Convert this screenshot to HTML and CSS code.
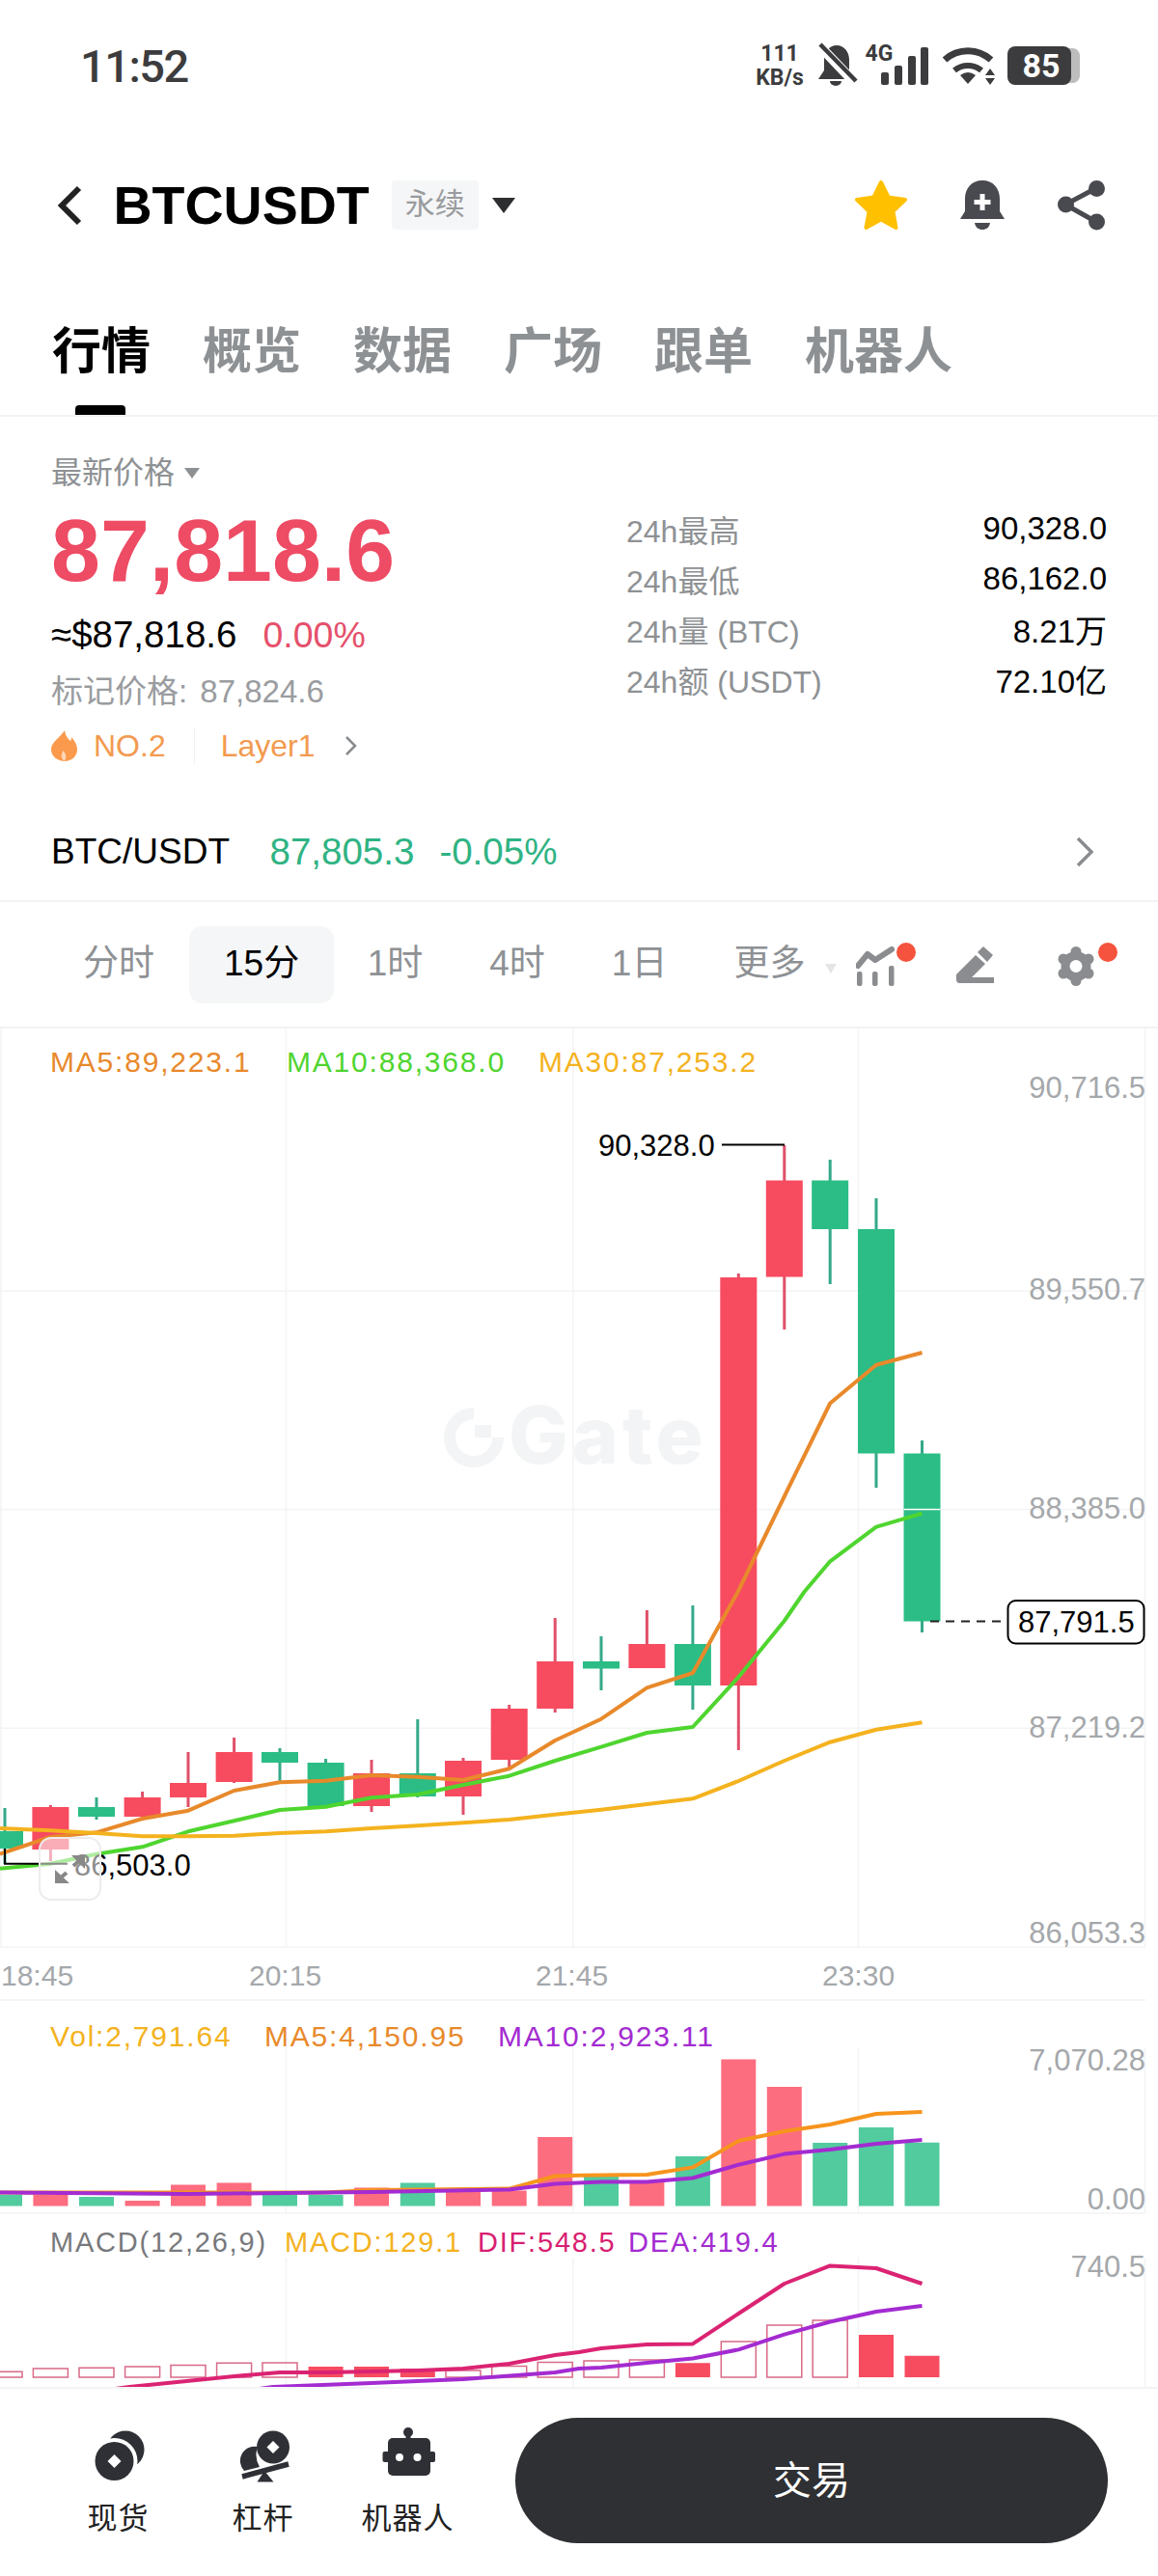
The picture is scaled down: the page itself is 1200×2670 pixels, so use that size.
FILE: index.html
```html
<!DOCTYPE html>
<html lang="zh-CN">
<head>
  <meta charset="UTF-8" />
  <meta name="viewport" content="width=device-width, initial-scale=1.0"/>
  <title>BTCUSDT</title>
  <link rel="stylesheet" href="styles.css">
</head>
<body>
  <div class="status-bar">
    <span class="clock">11:52</span>
    <svg class="status-icons" width="340" height="50" viewBox="782 42 340 50">
      <text class="net" x="808" y="63" text-anchor="middle">111</text>
      <text class="net" x="808" y="88" text-anchor="middle">KB/s</text>
      <path class="ink" d="M867 47c-8 0-13 7-13 15v11l-6 9h37l-5-9V62c0-8-5-15-13-15z"/>
      <path class="ink" d="M860 84h12a6 5 0 0 1-12 0z"/>
      <path d="M846 44l40 42" stroke="#fff" stroke-width="10"/>
      <path d="M850 46l37 38" stroke="#3c3c3e" stroke-width="4.5"/>
      <text class="net" x="911" y="63" text-anchor="middle">4G</text>
      <rect class="ink" x="913" y="75" width="8" height="13" rx="2"/>
      <rect class="ink" x="927" y="68" width="8" height="20" rx="2"/>
      <rect class="ink" x="941" y="58" width="8" height="30" rx="2"/>
      <rect class="ink" x="954" y="49" width="8" height="39" rx="2"/>
      <path d="M979 62A36 36 0 0 1 1027 62" fill="none" stroke="#3c3c3e" stroke-width="7"/>
      <path d="M989 73A22 22 0 0 1 1017 73" fill="none" stroke="#3c3c3e" stroke-width="6"/>
      <path class="ink" d="M995 78Q1003 72 1011 78L1003 87z"/>
      <path class="ink" d="M1026 71l5 7h-10zM1026 88l5-7h-10z"/>
      <path d="M1108 50h4c4 0 7 4 7 8v20c0 4-3 8-7 8h-4z" fill="#bdbdbd"/>
      <rect class="ink" x="1044" y="48" width="66" height="40" rx="8"/>
      <text class="batt" x="1079" y="80" text-anchor="middle">85</text>
    </svg>
  </div>

  <div class="nav">
    <svg class="back" width="26" height="42" viewBox="0 0 26 42"><path d="M23 3L5 21l18 18" fill="none" stroke="#222" stroke-width="6"/></svg>
    <span class="symbol">BTCUSDT</span>
    <span class="perp">永续</span>
    <span class="caret"></span>
    <div class="nav-icons">
      <svg width="54" height="52" viewBox="884 186 54 52">
        <path d="M911 188l7.600 15.500 17.400 2.500-12.600 12 3.100 17-15.500-8.500-15.500 8.500 3.100-17-12.600-12 17.400-2.500z" fill="#ffc000" stroke="#ffc000" stroke-width="4" stroke-linejoin="round"/>
      </svg>
      <svg width="46" height="52" viewBox="993 186 46 52">
        <path class="icon" d="M1016 186c-11 0-18 8-18 19v13l-5 8h46l-5-8v-13c0-11-7-19-18-19z"/>
        <path class="icon" d="M1008 230h16c-1 5-4 7-8 7s-7-2-8-7z"/>
        <path d="M1013.500 200h5v6h6v5h-6v6h-5v-6h-6v-5h6z" fill="#fff"/>
      </svg>
      <svg width="50" height="52" viewBox="1097 186 50 52">
        <path d="M1137 194l-32 17 32 18" fill="none" stroke="#484a4f" stroke-width="5"/>
        <circle class="icon" cx="1137.500" cy="194.500" r="8.500"/>
        <circle class="icon" cx="1105.500" cy="211" r="8.500"/>
        <circle class="icon" cx="1137.500" cy="229" r="8.500"/>
      </svg>
    </div>
  </div>

  <div class="tabs">
    <span class="tab active">行情</span>
    <span class="tab">概览</span>
    <span class="tab">数据</span>
    <span class="tab">广场</span>
    <span class="tab">跟单</span>
    <span class="tab">机器人</span>
  </div>

  <div class="price-panel">
    <div class="price-left">
      <div class="price-label">最新价格<span class="mini-caret"></span></div>
      <div class="last-price">87,818.6</div>
      <div class="fiat">≈$87,818.6<span class="change">0.00%</span></div>
      <div class="mark">标记价格: 87,824.6</div>
      <div class="rank">
        <svg width="27" height="32" viewBox="0 0 27 32">
          <path d="M14 0c1 6 3 8 6 11 1-1 1-3 1-4 4 4 6 9 6 13 0 7-6 12-13 12S0 27 0 20C0 12 8 9 14 0z" fill="#fb9a4c"/>
          <path d="M13.500 32c-3-3-4-6-1-11 3 4 4 7 1 11z" fill="#fff" opacity="0.6"/>
        </svg>
        <span class="rank-no">NO.2</span>
        <span class="rank-tag">Layer1</span>
        <svg width="13" height="22" viewBox="0 0 13 22"><path d="M2 2l9 9-9 9" fill="none" stroke="#888b8e" stroke-width="2.500"/></svg>
      </div>
    </div>
    <div class="stats">
      <div class="stat"><span>24h最高</span><b>90,328.0</b></div>
      <div class="stat"><span>24h最低</span><b>86,162.0</b></div>
      <div class="stat"><span>24h量 (BTC)</span><b>8.21万</b></div>
      <div class="stat"><span>24h额 (USDT)</span><b>72.10亿</b></div>
    </div>
  </div>

  <div class="spot-row">
    <span class="pair">BTC/USDT</span>
    <span class="spot-price">87,805.3</span>
    <span class="spot-change">-0.05%</span>
    <svg class="spot-arrow" width="20" height="32" viewBox="0 0 20 32"><path d="M3 2l14 14L3 30" fill="none" stroke="#8a8c8f" stroke-width="3.500"/></svg>
  </div>

  <div class="intervals">
    <span class="interval">分时</span>
    <span class="interval current">15分</span>
    <span class="interval">1时</span>
    <span class="interval">4时</span>
    <span class="interval">1日</span>
    <span class="interval">更多</span>
    <span class="more-caret"></span>
    <div class="tools">
      <svg width="62" height="46" viewBox="888 975 62 46">
        <path d="M890 999l10-12 8 6 17-11" fill="none" stroke="#8a8c8f" stroke-width="6" stroke-linecap="round" stroke-linejoin="round"/>
        <rect class="tool" x="889" y="1005" width="5.500" height="15" rx="2"/>
        <rect class="tool" x="905" y="1005" width="5.500" height="15" rx="2"/>
        <rect class="tool" x="922" y="999" width="5.500" height="21" rx="2"/>
        <circle class="dot" cx="940" cy="985" r="10"/>
      </svg>
      <svg class="tool-pen" width="40" height="40" viewBox="992 980 40 40">
        <path class="tool" d="M1020 981l10 9-6 7-10-10z"/>
        <path class="tool" d="M1012 990l10 9-14 14h23v6h-36c-1.500 0-3-1.500-3-3v-6z"/>
      </svg>
      <svg width="62" height="46" viewBox="1096 975 62 46">
        <circle class="tool" cx="1115" cy="999.500" r="15.500"/>
        <circle class="tool" cx="1115" cy="984.500" r="5.500"/>
        <circle class="tool" cx="1128" cy="992" r="5.500"/>
        <circle class="tool" cx="1128" cy="1007" r="5.500"/>
        <circle class="tool" cx="1115" cy="1014.500" r="5.500"/>
        <circle class="tool" cx="1102" cy="1007" r="5.500"/>
        <circle class="tool" cx="1102" cy="992" r="5.500"/>
        <circle cx="1115" cy="999.500" r="6.500" fill="#fff"/>
        <circle class="dot" cx="1148" cy="985" r="10"/>
      </svg>
    </div>
  </div>

  <svg class="chart" width="1200" height="1408" viewBox="0 1066 1200 1408">
    <!-- grid -->
    <path class="grid" d="M1 1066V2018M296.500 1066V2018M594 1066V2018M889.500 1066V2018M1186.500 1066V2018"/>
    <path class="grid" d="M0 1338H1187M0 1564.500H1187M0 1791.300H1187M0 2018.300H1187M0 2073H1187M0 2294H1187"/>
    <path class="grid" d="M296.500 2122V2294M594 2122V2294M889.500 2122V2294M1186.500 2122V2294M296.500 2340V2474M594 2340V2474M889.500 2340V2474M1186.500 2340V2474"/>

    <!-- watermark -->
    <path d="M491 1465A25 25 0 1 0 516 1490" fill="none" stroke="#f3f4f5" stroke-width="12"/>
    <rect x="492" y="1477" width="17" height="13" fill="#f3f4f5"/>
    <text class="mark-text" x="527" y="1517">Gate</text>

    <!-- candles -->
    <g class="wick-up">
      <path d="M52.400 1871V1929M147.600 1857V1887M195 1816V1873M242.600 1801V1848M385 1824V1878M480 1822V1881M527.700 1767V1833M575.200 1677V1775M670.400 1669V1705M765.300 1320V1814M812.800 1187V1378"/>
    </g>
    <g class="wick-down">
      <path d="M5 1874V1932M100 1863V1886M290 1812V1847M337.600 1823V1830M432.800 1782V1863M623 1696V1752M717.900 1664V1772M860.200 1202V1331M908 1242V1542M955.500 1493V1692"/>
    </g>
    <g class="up">
      <rect x="33.400" y="1873" width="38" height="44"/>
      <rect x="128.600" y="1863" width="38" height="20"/>
      <rect x="176" y="1848" width="38" height="15"/>
      <rect x="223.600" y="1816" width="38" height="31"/>
      <rect x="366" y="1838" width="38" height="34"/>
      <rect x="461" y="1825" width="38" height="37"/>
      <rect x="508.700" y="1771" width="38" height="53"/>
      <rect x="556.200" y="1722" width="38" height="49"/>
      <rect x="651.400" y="1704" width="38" height="25"/>
      <rect x="746.300" y="1324" width="38" height="423"/>
      <rect x="793.800" y="1223.500" width="38" height="100"/>
    </g>
    <g class="down">
      <rect x="-14" y="1898" width="38" height="18"/>
      <rect x="81" y="1873" width="38" height="10"/>
      <rect x="271" y="1816" width="38" height="11"/>
      <rect x="318.600" y="1827" width="38" height="45"/>
      <rect x="413.800" y="1838" width="38" height="24"/>
      <rect x="604" y="1722" width="38" height="7.500"/>
      <rect x="698.900" y="1704" width="38" height="43"/>
      <rect x="841.200" y="1223.500" width="38" height="50.500"/>
      <rect x="889" y="1274" width="38" height="232.500"/>
      <rect x="936.500" y="1506.500" width="38" height="174"/>
    </g>
    <path d="M936.500 1564.500H974.500" stroke="#fff" stroke-width="1.500"/>

    <!-- price averages -->
    <polyline class="ma5" points="0,1921.700 52.400,1904 100,1899.300 147.600,1885 195,1876.700 242.600,1856 290,1847.300 337.600,1845.700 385,1840 432.800,1841.700 480,1845 527.700,1833.300 575.200,1804 623,1781.700 670.400,1749.300 717.900,1734 764.600,1650 812.800,1551 860.200,1454.500 908,1414.700 955.500,1402"/>
    <polyline class="ma10" points="0,1936.700 52.400,1931.700 100,1921.700 147.600,1914.300 195,1898.300 242.600,1887.300 290,1876 337.600,1872.700 385,1863.300 432.800,1860 480,1850 527.700,1840.700 575.200,1825 623,1810.700 670.400,1796 717.900,1790 765.300,1738.300 812.800,1680 833.400,1650 860.200,1618.300 908,1582.700 955.500,1568.600"/>
    <polyline class="ma30" points="0,1895 52.400,1897.300 100,1900 147.600,1903.300 195,1903.300 242.600,1902.700 290,1900 337.600,1898.300 385,1895 432.800,1892.300 480,1889.300 527.700,1886 575.200,1880.700 623,1875.700 670.400,1870 717.900,1864.300 765.300,1846 812.800,1825 860.200,1805.700 908,1792.700 955.500,1785.300"/>

    <!-- legend and axis -->
    <text class="legend wide c-ma5" x="52" y="1111">MA5:89,223.1</text>
    <text class="legend wide c-ma10" x="297" y="1111">MA10:88,368.0</text>
    <text class="legend wide c-ma30" x="558" y="1111">MA30:87,253.2</text>
    <text class="axis" x="1187" y="1138">90,716.5</text>
    <text class="axis" x="1187" y="1346.500">89,550.7</text>
    <text class="axis" x="1187" y="1573.500">88,385.0</text>
    <text class="axis" x="1187" y="1801">87,219.2</text>
    <text class="axis" x="1187" y="2014.300">86,053.3</text>

    <!-- high, low and last price marks -->
    <path class="pointer" d="M748 1186.500H813"/>
    <text class="note" x="620" y="1198">90,328.0</text>
    <path class="pointer" d="M5 1916V1931.700H70"/>
    <text class="note" x="77" y="1944">86,503.0</text>
    <path d="M964 1680.500H1042" stroke="#222" stroke-width="2" stroke-dasharray="9 7"/>
    <rect x="1044.500" y="1659" width="141" height="44.500" rx="8" fill="#fff" stroke="#000" stroke-width="2"/>
    <text class="note" x="1055" y="1692">87,791.5</text>

    <!-- fullscreen toggle -->
    <rect x="41" y="1905" width="63" height="64" rx="12" fill="#fff" fill-opacity="0.55" stroke="#ececec" stroke-width="2"/>
    <path d="M57 1938v14h15zM74 1923h14v14z" fill="#888"/>
    <path d="M62 1947l7-6M83 1928l-7 6" stroke="#888" stroke-width="4"/>

    <!-- time axis -->
    <text class="time" x="1" y="2058">18:45</text>
    <text class="time" x="258" y="2058">20:15</text>
    <text class="time" x="555" y="2058">21:45</text>
    <text class="time" x="852" y="2058">23:30</text>

    <!-- volume -->
    <path class="vol-up" d="M34.400 2286.400V2275h36V2286.400zM129.600 2286.400V2281h36V2286.400zM177 2286.400V2264.600h36V2286.400zM224.600 2286.400V2262.600h36V2286.400zM367 2286.400V2267.400h36V2286.400zM462 2286.400V2271h36V2286.400zM509.700 2286.400V2270.600h36V2286.400zM557.200 2286.400V2215h36V2286.400zM652.400 2286.400V2261.500h36V2286.400zM747.300 2286.400V2134.600h36V2286.400zM794.800 2286.400V2163h36V2286.400z"/>
    <path class="vol-down" d="M-13 2286.400V2275h36V2286.400zM82 2286.400V2277h36V2286.400zM272 2286.400V2275h36V2286.400zM319.600 2286.400V2275h36V2286.400zM414.800 2286.400V2262.600h36V2286.400zM605 2286.400V2255.500h36V2286.400zM699.900 2286.400V2235h36V2286.400zM842.200 2286.400V2221h36V2286.400zM890 2286.400V2205h36V2286.400zM937.500 2286.400V2220.700h36V2286.400z"/>
    <polyline class="vol-ma5" points="0,2272.500 337.600,2272.500 385,2270 527.700,2268.600 575.200,2255.500 600,2254.700 670.400,2254 717.900,2246.400 765.300,2219 812.800,2209 860.200,2202 908,2191 955.500,2189"/>
    <polyline class="vol-ma10" points="0,2272.500 195,2274 385,2272 527.700,2269.400 575.200,2263.400 623,2261.500 670.400,2261.500 717.900,2257.500 765.300,2243.700 812.800,2232.600 860.200,2227.900 908,2222 955.500,2218"/>
    <text class="legend wide c-ma30" x="52" y="2121">Vol:2,791.64</text>
    <text class="legend wide c-ma5" x="274" y="2121">MA5:4,150.95</text>
    <text class="legend wide c-purple" x="516" y="2121">MA10:2,923.11</text>
    <text class="axis" x="1187" y="2146">7,070.28</text>
    <text class="axis" x="1187" y="2290">0.00</text>

    <!-- macd -->
    <path class="macd-hollow" d="M-13 2458.300h36v5.700h-36zM34.400 2455h36v9h-36zM82 2454.300h36v9.700h-36zM129.600 2453h36v11h-36zM177 2451.600h36v12.400h-36zM224.600 2449.200h36v14.800h-36zM272 2449h36v15h-36zM462 2457h36v7h-36zM509.700 2452.400h36v11.600h-36zM557.200 2448.400h36v15.600h-36zM605 2447h36v17h-36zM652.400 2446h36v18h-36zM747.300 2427h36v37h-36zM794.800 2410h36v54h-36zM842.200 2405h36v59h-36z"/>
    <path class="macd-fill" d="M319.600 2453h36v11h-36zM367 2453h36v11h-36zM414.800 2455h36v9h-36zM699.900 2449.200h36v14.800h-36zM890 2420h36v44h-36zM937.500 2441.700h36v22.300h-36z"/>
    <polyline class="dif" points="90,2480 134,2474 242.600,2463 290,2459 337.600,2459 385,2458 432.800,2457 480,2455 527.700,2450 575.200,2441 600,2438 623,2434 670.400,2430 717.900,2429.400 765.300,2398 812.800,2367 860.200,2348.400 908,2351 955.500,2367"/>
    <polyline class="dea" points="240,2480 283,2474 385,2470 480,2466 575.200,2459 600,2455 623,2454 670.400,2449 717.900,2444.500 765.300,2435.400 812.800,2419.600 860.200,2406.500 908,2396 955.500,2390"/>
    <text class="legend c-gray" x="52" y="2334">MACD(12,26,9)</text>
    <text class="legend c-ma30" x="295" y="2334">MACD:129.1</text>
    <text class="legend c-pink" x="495" y="2334">DIF:548.5</text>
    <text class="legend c-purple" x="651" y="2334">DEA:419.4</text>
    <text class="axis" x="1187" y="2360">740.5</text>
  </svg>

  <div class="bottom-bar">
    <div class="shortcut">
      <svg width="60" height="60" viewBox="0 0 60 60">
        <circle class="dark" cx="37" cy="24" r="19.500"/>
        <circle cx="25.500" cy="36" r="24" fill="#fff"/>
        <circle class="dark" cx="25.500" cy="36" r="20"/>
        <path d="M25.500 29l7 7-7 7-7-7z" fill="#fff"/>
      </svg>
      <span>现货</span>
    </div>
    <div class="shortcut">
      <svg width="60" height="60" viewBox="0 0 60 60">
        <circle class="dark" cx="40" cy="21.500" r="17"/>
        <path d="M40 15l6.500 6.500-6.500 6.500-6.500-6.500z" fill="#fff"/>
        <path class="dark" d="M24 21A15 15 0 0 0 10 46l16-4A25 25 0 0 1 24 21z"/>
        <path d="M8 52L56 39" stroke="#2e3036" stroke-width="5.500"/>
        <path class="dark" d="M31 46l9.500 11.500h-17z"/>
      </svg>
      <span>杠杆</span>
    </div>
    <div class="shortcut">
      <svg width="60" height="60" viewBox="0 0 60 60">
        <circle class="dark" cx="30" cy="6" r="5"/>
        <rect class="dark" x="27.500" y="6" width="5" height="8"/>
        <rect class="dark" x="3.500" y="26" width="54.500" height="11" rx="2"/>
        <rect class="dark" x="9" y="12" width="44" height="39" rx="5"/>
        <circle cx="21" cy="32" r="4" fill="#fff"/>
        <circle cx="39.500" cy="32" r="4" fill="#fff"/>
      </svg>
      <span>机器人</span>
    </div>
    <button class="trade">交易</button>
  </div>
</body>
</html>
```

FILE: styles.css
```css
* {
  box-sizing: border-box;
}

body {
  margin: 0;
  width: 1200px;
  background: #fff;
  font-family: "Liberation Sans", "Noto Sans CJK SC", sans-serif;
  color: #000;
}

svg {
  display: block;
  flex: none;
}

/* status bar */
.status-bar {
  height: 150px;
  display: flex;
  justify-content: space-between;
  padding: 42px 78px 0 83px;
}

.clock {
  font-family: Roboto, sans-serif;
  font-size: 47px;
  font-weight: 500;
  line-height: 54px;
  letter-spacing: -1.5px;
  color: #3c3c3e;
}

.status-icons .ink {
  fill: #3c3c3e;
}

.net {
  font-family: Roboto, sans-serif;
  font-size: 23px;
  font-weight: 700;
  fill: #3c3c3e;
}

.batt {
  font-family: Roboto, sans-serif;
  font-size: 34px;
  font-weight: 700;
  fill: #fff;
}

/* header */
.nav {
  height: 125px;
  display: flex;
  align-items: center;
  padding: 0 54px 0 59px;
}

.back {
  margin-right: 32.5px;
}

.symbol {
  font-size: 55.5px;
  font-weight: 700;
  line-height: 60px;
}

.perp {
  margin-left: 23px;
  width: 90px;
  height: 51px;
  background: #f5f6f7;
  border-radius: 4px;
  color: #999b9e;
  font-size: 31px;
  line-height: 50px;
  text-align: center;
}

.caret {
  margin-left: 14px;
  border-left: 12px solid transparent;
  border-right: 12px solid transparent;
  border-top: 16px solid #2d2e30;
}

.nav-icons {
  margin-left: auto;
  display: flex;
  gap: 55px;
}

.icon {
  fill: #484a4f;
}

/* tabs */
.tabs {
  height: 157px;
  display: flex;
  gap: 54px;
  padding: 53px 0 0 54px;
  border-bottom: 2px solid #f2f3f4;
}

.tab {
  position: relative;
  height: 102px;
  font-size: 51px;
  font-weight: 700;
  line-height: 74px;
  color: #8e9194;
}

.tab.active {
  color: #000;
}

.tab.active::after {
  content: "";
  position: absolute;
  left: 24px;
  bottom: 0;
  width: 52px;
  height: 10px;
  background: #000;
  border-radius: 4px 4px 0 0;
}

/* price panel */
.price-panel {
  height: 368px;
  display: flex;
  padding-left: 53px;
}

.price-left {
  width: 596px;
  padding-top: 40px;
}

.price-label {
  height: 36px;
  display: flex;
  align-items: center;
  font-size: 32px;
  line-height: 36px;
  color: #8e9194;
}

.mini-caret {
  margin-left: 10px;
  border-left: 8px solid transparent;
  border-right: 8px solid transparent;
  border-top: 11px solid #8e9194;
}

.last-price {
  margin-top: 14px;
  font-size: 91.5px;
  font-weight: 700;
  line-height: 96px;
  color: #ee4b64;
}

.fiat {
  margin-top: 18px;
  font-size: 38.5px;
  line-height: 44px;
}

.change {
  margin-left: 27px;
  font-size: 37.5px;
  color: #e5506b;
}

.mark {
  margin-top: 17px;
  font-size: 33px;
  line-height: 40px;
  word-spacing: 4px;
  color: #9a9c9f;
}

.rank {
  margin-top: 16px;
  height: 40px;
  display: flex;
  align-items: center;
  font-size: 32px;
  color: #f39a4f;
}

.rank-no {
  margin-left: 17px;
}

.rank-tag {
  margin-left: 29px;
  padding-left: 27px;
  border-left: 1px solid #f1f1f2;
  margin-right: 30px;
}

.stats {
  width: 498px;
  padding-top: 90px;
}

.stat {
  height: 52px;
  display: flex;
  justify-content: space-between;
  align-items: center;
  font-size: 32px;
}

.stat span {
  color: #8e9194;
}

.stat b {
  font-size: 33px;
  font-weight: 400;
}

/* spot row */
.spot-row {
  height: 135px;
  display: flex;
  align-items: center;
  padding: 32px 66px 0 53px;
  border-bottom: 2px solid #f2f3f4;
  font-size: 38.5px;
}

.pair {
  font-size: 37px;
}

.spot-price {
  margin-left: 41.5px;
  color: #2fb383;
}

.spot-change {
  margin-left: 26px;
  color: #2fb383;
}

.spot-arrow {
  margin-left: auto;
}

/* interval bar */
.intervals {
  height: 131px;
  display: flex;
  align-items: center;
  padding-left: 50px;
  border-bottom: 2px solid #f2f3f4;
}

.interval {
  height: 80px;
  padding: 0 34.5px;
  font-size: 37px;
  line-height: 78px;
  color: #8e9194;
  border-radius: 14px;
}

.interval:first-child,
.interval.current {
  padding: 0 36px;
}

.interval.current {
  background: #f5f6f7;
  color: #000;
}

.more-caret {
  margin: 8px 0 0 -14px;
  border-left: 6px solid transparent;
  border-right: 6px solid transparent;
  border-top: 10px solid #e4e5e6;
}

.tools {
  margin-left: auto;
  margin-right: 42px;
  display: flex;
  align-items: center;
}

.tools .tool-pen {
  margin: 0 65px 0 42px;
}

.tool {
  fill: #8a8c8f;
}

.dot {
  fill: #f5533d;
}

/* chart */
.chart text {
  font-family: "Liberation Sans", sans-serif;
}

.grid {
  fill: none;
  stroke: #f3f4f5;
  stroke-width: 1.5;
}

.mark-text {
  font-size: 82px;
  font-weight: 800;
  letter-spacing: 4px;
  fill: #f3f4f5;
}

.chart .mark-text {
  font-family: Inter, sans-serif;
}

.up {
  fill: #f74b60;
}

.down {
  fill: #2bbd85;
}

.wick-up path {
  fill: none;
  stroke: #e0506a;
  stroke-width: 3;
}

.wick-down path {
  fill: none;
  stroke: #35a98a;
  stroke-width: 3;
}

polyline {
  fill: none;
  stroke-width: 4;
  stroke-linejoin: round;
}

.ma5 {
  stroke: #e8892b;
}

.ma10 {
  stroke: #4fd52f;
}

.ma30 {
  stroke: #f4b21e;
}

.legend {
  font-size: 29px;
  letter-spacing: 1.8px;
}

.legend.wide {
  font-size: 30px;
  letter-spacing: 1.8px;
}

.c-ma5 {
  fill: #e8892b;
}

.c-ma10 {
  fill: #4fd52f;
}

.c-ma30 {
  fill: #f4b21e;
}

.c-purple {
  fill: #a32bd1;
}

.c-pink {
  fill: #d81e72;
}

.c-gray {
  fill: #77797c;
}

.axis {
  font-size: 31px;
  text-anchor: end;
  fill: #a5a8ab;
}

.time {
  font-size: 30px;
  fill: #a5a8ab;
}

.note {
  font-size: 31px;
  fill: #000;
}

.pointer {
  fill: none;
  stroke: #000;
  stroke-width: 2;
}

.vol-up {
  fill: #fc6d7f;
}

.vol-down {
  fill: #52cb9e;
}

.vol-ma5 {
  stroke: #f7941d;
}

.vol-ma10 {
  stroke: #a32bd1;
}

.macd-hollow {
  fill: none;
  stroke: #d86a88;
  stroke-width: 1.5;
}

.macd-fill {
  fill: #f74b60;
}

.dif {
  stroke: #db2373;
}

.dea {
  stroke: #a32bd1;
}

/* bottom bar */
.bottom-bar {
  height: 196px;
  display: flex;
  align-items: flex-start;
  padding: 30px 0 0 47.5px;
  border-top: 2px solid #f3f4f5;
}

.shortcut {
  width: 150px;
  padding-top: 9px;
  display: flex;
  flex-direction: column;
  align-items: center;
  font-size: 31px;
  line-height: 44px;
  color: #222;
}

.shortcut span {
  margin-top: 14px;
  letter-spacing: 1px;
}

.dark {
  fill: #2e3036;
}

.trade {
  margin-left: 36.5px;
  width: 614px;
  height: 130px;
  padding: 0 0 6px;
  border: none;
  border-radius: 65px;
  background: #2f3033;
  color: #fff;
  font-family: "Noto Sans CJK SC", sans-serif;
  font-size: 40px;
}
```
